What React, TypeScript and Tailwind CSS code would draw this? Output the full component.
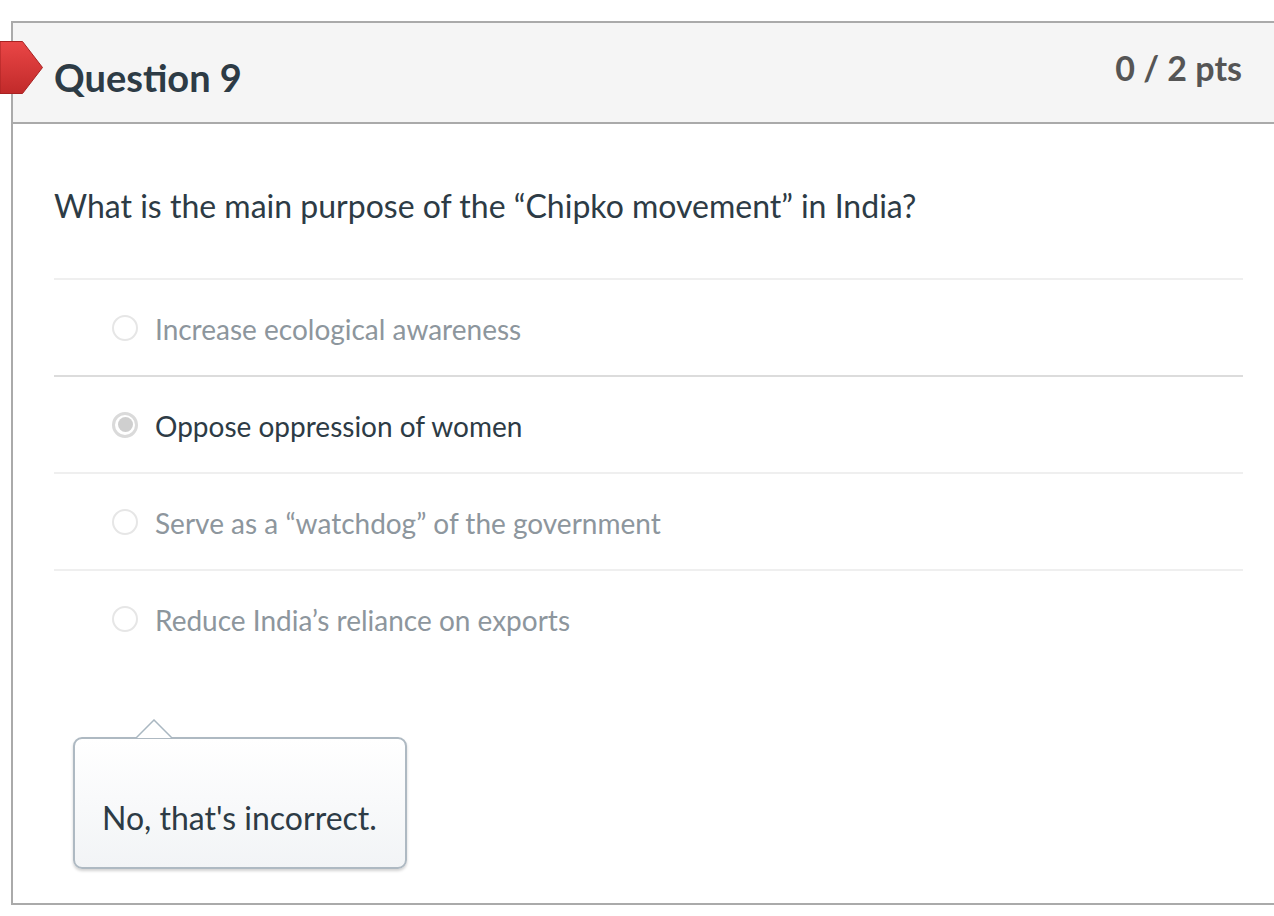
const answers = [
  { text: "Increase ecological awareness", selected: false },
  { text: "Oppose oppression of women", selected: true },
  { text: "Serve as a \u201cwatchdog\u201d of the government", selected: false },
  { text: "Reduce India\u2019s reliance on exports", selected: false },
]

function Flag() {
  return (
    <svg width="44" height="54" viewBox="0 0 44 54" className="absolute left-0 top-[41px]">
      <defs>
        <linearGradient id="flag" x1="0" y1="0" x2="0" y2="1">
          <stop offset="0" stopColor="#ea4646" />
          <stop offset="1" stopColor="#c12a2a" />
        </linearGradient>
      </defs>
      <path d="M0 0.5 H22.5 L42.5 26.5 L22.5 52.5 H0 Z" fill="url(#flag)" stroke="#a82222" strokeWidth="1" />
    </svg>
  )
}

function Radio({ selected }: { selected: boolean }) {
  if (selected) {
    return (
      <span className="flex h-[26px] w-[26px] shrink-0 items-center justify-center rounded-full border-[3px] border-[#dadada] bg-white">
        <span className="h-[15px] w-[15px] rounded-full bg-[#cfcfcf]" />
      </span>
    )
  }
  return <span className="h-[26px] w-[26px] shrink-0 rounded-full border-2 border-[#e6e6e6] bg-white" />
}

export default function App() {
  return (
    <div
      className="relative h-[916px] w-[1274px] overflow-hidden bg-white pl-[11px] pt-[21px]"
      style={{ fontFamily: "Lato, 'Open Sans', sans-serif" }}
    >
      <div className="w-[1280px] border-b-2 border-l-2 border-t-2 border-[#aaaaaa]">
        {/* header */}
        <div className="flex h-[101px] items-start justify-between border-b-2 border-[#aaaaaa] bg-[#f5f5f5] pl-[41px] pr-[49px]">
          <h2 className="mt-[32px] text-[38px] font-bold leading-[1.2] text-[#2d3b45]">Question 9</h2>
          <div className="mt-[25px] text-[34px] font-bold leading-[1.2] text-[#555555]">0 / 2 pts</div>
        </div>

        {/* body */}
        <div className="pl-[41px] pt-[63px]">
          <p className="text-[32px] leading-[1.2] text-[#2d3b45]">
            What is the main purpose of the {"\u201c"}Chipko movement{"\u201d"} in India?
          </p>

          <div className="mt-[53px] w-[1189px]">
            {answers.map((a, i) => (
              <div
                key={i}
                className={
                  "flex h-[97px] items-center gap-[17px] border-t-2 pl-[58px] " +
                  (i === 1 ? "border-[#dcdcdc]" : "border-[#efefef]")
                }
              >
                <Radio selected={a.selected} />
                <span
                  className={
                    "pt-[4px] text-[28px] leading-[1.2] " + (a.selected ? "text-[#2d3b45]" : "text-[#8d969d]")
                  }
                >
                  {a.text}
                </span>
              </div>
            ))}
          </div>

          {/* feedback bubble */}
          <div className="relative ml-[19px] mt-[71px] w-[334px]">
            <svg width="40" height="20" viewBox="0 0 40 20" className="absolute left-[63px] top-[-18px]">
              <path d="M0 19 L18 1 L36 19" fill="#ffffff" stroke="#a9b7c1" strokeWidth="1.5" />
            </svg>
            <div className="flex h-[132px] items-end rounded-[9px] border-2 border-[#aeb9c2] bg-gradient-to-b from-white to-[#f2f4f6] pb-[30px] pl-[27px] shadow-[0_2px_3px_rgba(0,0,0,0.18)]">
              <span className="text-[32px] leading-[1.2] text-[#2d3b45]">No, that's incorrect.</span>
            </div>
          </div>
          <div className="h-[34px]" />
        </div>
      </div>
      <Flag />
    </div>
  )
}
